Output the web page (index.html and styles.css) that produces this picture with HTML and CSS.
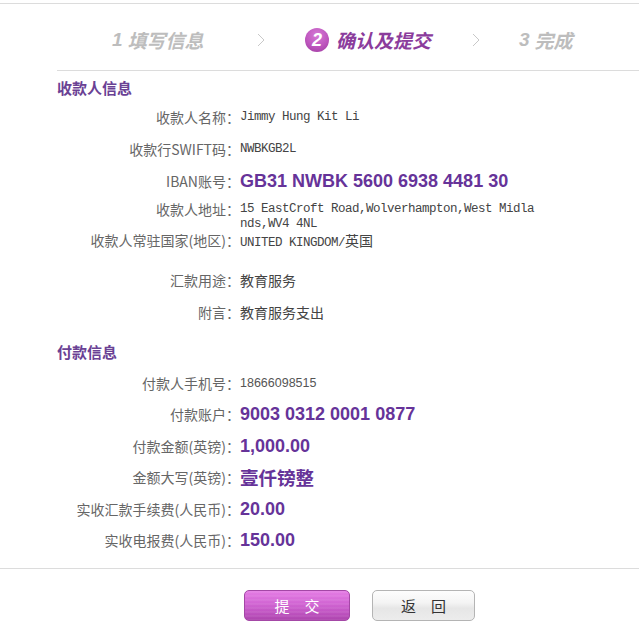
FILE: index.html
```html
<!DOCTYPE html>
<html lang="zh-CN">
<head>
<meta charset="utf-8">
<title>确认及提交</title>
<link rel="stylesheet" href="styles.css">
</head>
<body>
<div class="topline"></div>
<div class="steps">
  <div class="step s1"><span class="stepnum">1</span><span class="stxt">填写信息</span></div>
  <svg class="chev" width="8" height="14" viewBox="0 0 8 14"><polyline points="1,1 7,7 1,13" fill="none" stroke="#c8c8c8" stroke-width="1"/></svg>
  <div class="step s2"><span class="circle">2</span><span class="stxt">确认及提交</span></div>
  <svg class="chev c2" width="8" height="14" viewBox="0 0 8 14"><polyline points="1,1 7,7 1,13" fill="none" stroke="#c8c8c8" stroke-width="1"/></svg>
  <div class="step s3"><span class="stepnum">3</span><span class="stxt">完成</span></div>
</div>
<div class="main">
  <div class="sec-title t1">收款人信息</div>
  <div class="row"><div class="lbl">收款人名称：</div><div class="val mono">Jimmy Hung Kit Li</div></div>
  <div class="row"><div class="lbl">收款行SWIFT码：</div><div class="val mono">NWBKGB2L</div></div>
  <div class="row"><div class="lbl">IBAN账号：</div><div class="val big">GB31 NWBK 5600 6938 4481 30</div></div>
  <div class="row tight addr"><div class="lbl">收款人地址：</div><div class="val mono wrap">15 EastCroft Road,Wolverhampton,West Midlands,WV4 4NL</div></div>
  <div class="row tight country"><div class="lbl">收款人常驻国家(地区)：</div><div class="val mono">UNITED KINGDOM/<span class="cjk">英国</span></div></div>
  <div class="row purpose"><div class="lbl">汇款用途：</div><div class="val cjk">教育服务</div></div>
  <div class="row"><div class="lbl">附言：</div><div class="val cjk">教育服务支出</div></div>
  <div class="sec-title t2">付款信息</div>
  <div class="row r2"><div class="lbl">付款人手机号：</div><div class="val phone">18666098515</div></div>
  <div class="row r2"><div class="lbl">付款账户：</div><div class="val big">9003 0312 0001 0877</div></div>
  <div class="row r2"><div class="lbl">付款金额(英镑)：</div><div class="val big">1,000.00</div></div>
  <div class="row r2"><div class="lbl">金额大写(英镑)：</div><div class="val big bigcjk">壹仟镑整</div></div>
  <div class="row r2"><div class="lbl">实收汇款手续费(人民币)：</div><div class="val big">20.00</div></div>
  <div class="row r2"><div class="lbl">实收电报费(人民币)：</div><div class="val big">150.00</div></div>
</div>
<div class="bottomline"></div>
<div class="buttons">
  <button class="btn submit">提　交</button>
  <button class="btn back">返　回</button>
</div>
</body>
</html>
```
FILE: styles.css
```css
html, body {
  margin: 0;
  padding: 0;
  background: #fff;
}
body {
  width: 639px;
  font-family: "Noto Sans CJK SC", "Liberation Sans", sans-serif;
  font-size: 14px;
  color: #555;
}
.topline {
  margin-top: 3px;
  height: 1px;
  background: #dcdcdc;
}
.steps {
  display: flex;
  align-items: center;
  height: 60px;
  padding-top: 6px;
  padding-left: 112px;
}
.step {
  display: flex;
  align-items: center;
  font-weight: bold;
  font-style: italic;
  font-size: 19px;
  line-height: 24px;
  white-space: nowrap;
}
.stepnum {
  font-family: "Liberation Sans", sans-serif;
  font-size: 19px;
}
.s1, .s3 {
  color: #bdbdbd;
}
.s1 {
  width: 91px;
}
.s1 .stxt, .s3 .stxt {
  margin-left: 5px;
}
.chev {
  flex: none;
  margin-left: 54px;
}
.chev.c2 {
  margin-left: 42px;
}
.s2 {
  margin-left: 40px;
  width: 125px;
  color: #8b3c9c;
}
.circle {
  flex: none;
  width: 24px;
  height: 24px;
  border-radius: 50%;
  background: radial-gradient(circle at 50% 30%, #d67ad6 0%, #be56be 55%, #9c3a9e 100%);
  color: #fff;
  font-family: "Liberation Sans", sans-serif;
  font-size: 18px;
  line-height: 24px;
  text-align: center;
  font-style: italic;
}
.s2 .stxt {
  margin-left: 7px;
}
.s3 {
  margin-left: 39px;
}
.main {
  margin-left: 57px;
  border-top: 1px solid #dcdcdc;
}
.sec-title {
  font-size: 15px;
  font-weight: bold;
  color: #6a4194;
}
.t1 {
  padding-top: 4px;
  line-height: 26px;
  height: 26px;
}
.t2 {
  padding-top: 14px;
  line-height: 20px;
  height: 20px;
  padding-bottom: 5.5px;
}
.row {
  display: flex;
  align-items: center;
  height: 32px;
  line-height: 32px;
}
.row.r2 {
  height: 31.6px;
  line-height: 31.6px;
}
.row.tight {
  height: auto;
  line-height: 15px;
  align-items: flex-start;
}
.row.addr {
  margin-top: 5px;
}
.row.country {
  margin-top: 1px;
  height: 15px;
}
.row.country .cjk {
  line-height: 15px;
}
.row.purpose {
  margin-top: 16px;
}
.lbl {
  flex: none;
  width: 183px;
  text-align: right;
  color: #666;
  white-space: nowrap;
}
.val {
  color: #444;
  white-space: nowrap;
}
.mono {
  font-family: "Liberation Mono", monospace;
  font-size: 12.5px;
  letter-spacing: -0.5px;
}
.mono .cjk {
  letter-spacing: 0;
}
.cjk {
  font-family: "Noto Sans CJK SC", sans-serif;
  font-size: 14px;
}
.wrap {
  width: 296px;
  white-space: normal;
  word-break: break-all;
}
.phone {
  font-family: "Liberation Sans", sans-serif;
  font-size: 12.5px;
  color: #555;
}
.big {
  font-family: "Liberation Sans", sans-serif;
  font-size: 18px;
  font-weight: bold;
  color: #663399;
}
.bigcjk {
  font-family: "Noto Sans CJK SC", sans-serif;
  font-size: 18.5px;
}
.bottomline {
  margin-top: 11px;
  height: 1px;
  background: #dcdcdc;
}
.buttons {
  display: flex;
  gap: 22px;
  padding-left: 244px;
  margin-top: 21px;
}
.btn {
  box-sizing: border-box;
  height: 31px;
  border-radius: 5px;
  padding: 0;
  font-family: "Noto Sans CJK SC", sans-serif;
  font-size: 15px;
  line-height: 29px;
  cursor: pointer;
}
.submit {
  width: 106px;
  color: #fff;
  border: 1px solid #a447a6;
  background:
    repeating-linear-gradient(to bottom, rgba(255,255,255,0.06) 0, rgba(255,255,255,0.06) 2px, rgba(0,0,0,0) 2px, rgba(0,0,0,0) 4px),
    linear-gradient(to bottom, #e57de5 0%, #d064d2 45%, #c256c4 70%, #ad45ae 100%);
}
.back {
  width: 103px;
  color: #333;
  border: 1px solid #b4b4b4;
  background: linear-gradient(to bottom, #fdfdfd 0%, #f4f4f4 40%, #e6e6e6 60%, #ececec 100%);
}
```
